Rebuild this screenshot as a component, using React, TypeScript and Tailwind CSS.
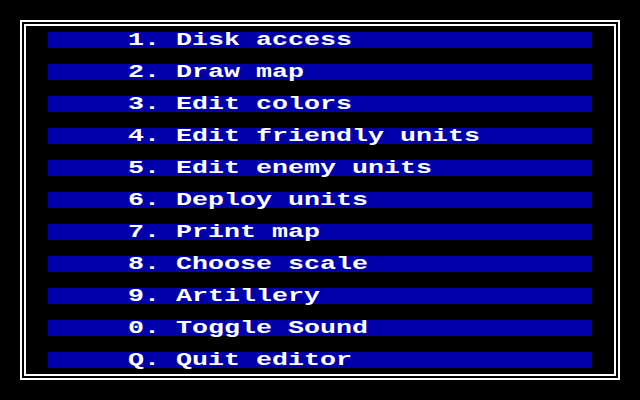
const items = [
  '1. Disk access',
  '2. Draw map',
  '3. Edit colors',
  '4. Edit friendly units',
  '5. Edit enemy units',
  '6. Deploy units',
  '7. Print map',
  '8. Choose scale',
  '9. Artillery',
  '0. Toggle Sound',
  'Q. Quit editor',
]

export default function App() {
  return (
    <div className="w-[640px] h-[400px] bg-black p-[20px]">
      {/* double white frame */}
      <div className="w-full h-full border-2 border-white p-[2px]">
        <div className="w-full h-full border-2 border-white px-[22px] py-[6px] flex flex-col gap-4">
          {items.map((item) => (
            <div key={item} className="h-4 bg-[#0000aa] pl-[80px] flex">
              <span
                className="block w-fit h-4 leading-4 text-[18px] font-bold text-white whitespace-pre origin-left scale-x-[1.4815]"
                style={{ fontFamily: '"Liberation Mono", "DejaVu Sans Mono", monospace' }}
              >
                {item}
              </span>
            </div>
          ))}
        </div>
      </div>
    </div>
  )
}
